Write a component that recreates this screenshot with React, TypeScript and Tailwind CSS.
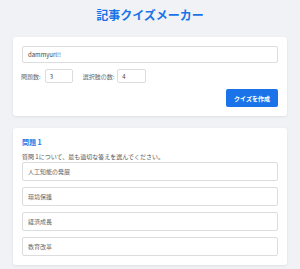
const options = ["人工知能の発展", "環境保護", "経済成長", "教育改革"];

export default function App() {
  const font = { fontFamily: '"Noto Sans CJK JP", "Noto Sans", sans-serif' };
  return (
    <div className="min-h-[269px] bg-[#f0f2f5] px-[13px] pb-4 text-[#333]" style={font}>
      {/* Title */}
      <h1 className="pt-[7px] h-[37px] text-center text-[12px] leading-[16px] font-bold text-[#1a73e8]">
        記事クイズメーカー
      </h1>

      {/* Form card */}
      <div className="bg-white rounded-[3px] shadow-[0_1px_3px_rgba(0,0,0,0.08)] p-[9px] h-[79px]">
        <div className="h-[17px] border border-[#ddd] rounded-[2px] px-[5px] flex items-center text-[6px] text-[#444]">
          dammyurl!!
        </div>
        <div className="mt-[6px] flex items-center text-[6px] text-[#666]">
          <span className="-ml-[1px] mr-[4px]">問題数:</span>
          <div className="w-[28px] h-[14px] border border-[#ddd] rounded-[2px] px-[4px] flex items-center text-[#444]">
            3
          </div>
          <span className="ml-[10px] mr-[3px]">選択肢の数:</span>
          <div className="w-[29px] h-[14px] border border-[#ddd] rounded-[2px] px-[4px] flex items-center text-[#444]">
            4
          </div>
        </div>
        <div className="mt-[6px] flex justify-end">
          <button className="w-[52px] h-[18px] bg-[#1a73e8] rounded-[2px] text-white text-[6px] font-bold">
            クイズを作成
          </button>
        </div>
      </div>

      {/* Quiz card */}
      <div className="mt-[12px] bg-white rounded-[3px] shadow-[0_1px_3px_rgba(0,0,0,0.08)] px-[9px] pt-[9px] pb-[9px]">
        <h2 className="text-[7px] leading-[10px] font-bold text-[#1a73e8]">問題 1</h2>
        <p className="mt-[6px] text-[6px] leading-[8px] text-[#555]">
          質問 1について、最も適切な答えを選んでください。
        </p>
        <div className="mt-[1px] flex flex-col gap-[6px]">
          {options.map((o) => (
            <div
              key={o}
              className="h-[19px] border border-[#ddd] rounded-[2px] px-[5px] flex items-center text-[6px] text-[#666]"
            >
              {o}
            </div>
          ))}
        </div>
      </div>
    </div>
  );
}
